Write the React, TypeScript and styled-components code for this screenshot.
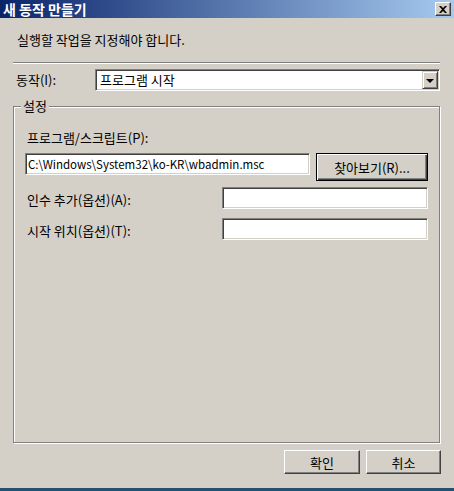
import React from "react";
import styled, { createGlobalStyle } from "styled-components";

const GlobalStyle = createGlobalStyle`
  html, body {
    margin: 0;
    padding: 0;
    background: #d4d0c8;
  }
  body {
    font-family: "Noto Sans CJK KR", "Noto Sans", sans-serif;
    font-size: 13px;
    color: #000;
  }
`;

const Window = styled.div`
  width: 454px;
  height: 491px;
  display: flex;
  flex-direction: column;
  background: #d4d0c8;
  overflow: hidden;
`;

const TitleBar = styled.div`
  height: 18px;
  flex: none;
  display: flex;
  align-items: center;
  justify-content: space-between;
  padding: 0 3px 0 3px;
  background: linear-gradient(to right, #0a246a, #a6caf0);
`;

const TitleText = styled.span`
  color: #fff;
  font-weight: bold;
  font-size: 14px;
  line-height: 18px;
  white-space: nowrap;
`;

const CloseButton = styled.button`
  width: 16px;
  height: 14px;
  padding: 0;
  margin: 0;
  display: flex;
  align-items: center;
  justify-content: center;
  background: #d4d0c8;
  border: 1px solid;
  border-color: #fff #404040 #404040 #fff;
  box-shadow: inset -1px -1px 0 #808080;
`;

const Body = styled.div`
  flex: 1;
  display: flex;
  flex-direction: column;
  padding: 0 13px 14px 13px;
  min-height: 0;
`;

const Instruction = styled.div`
  margin: 14px 0 0 4px;
  line-height: 16px;
  white-space: nowrap;
`;

const Separator = styled.div`
  margin: 14px 1px 0 0;
  height: 0;
  border-top: 1px solid #808080;
  border-bottom: 1px solid #fff;
`;

const ActionRow = styled.div`
  margin-top: 5px;
  display: flex;
  align-items: center;
  margin-right: 1px;
`;

const ActionLabel = styled.label`
  width: 79px;
  padding-left: 3px;
  line-height: 16px;
  white-space: nowrap;
`;

const Combo = styled.div`
  flex: 1;
  height: 22px;
  box-sizing: border-box;
  display: flex;
  align-items: center;
  background: #fff;
  border: 1px solid;
  border-color: #808080 #fff #fff #808080;
  box-shadow: inset 1px 1px 0 #404040, inset -1px -1px 0 #d4d0c8;
  padding: 1px;
`;

const ComboText = styled.span`
  flex: 1;
  padding-left: 3px;
  line-height: 16px;
  white-space: nowrap;
`;

const DropButton = styled.span`
  width: 16px;
  height: 18px;
  box-sizing: border-box;
  display: flex;
  align-items: center;
  justify-content: center;
  background: #d4d0c8;
  border: 1px solid;
  border-color: #d4d0c8 #404040 #404040 #d4d0c8;
  box-shadow: inset 1px 1px 0 #fff, inset -1px -1px 0 #808080;
`;

const Arrow = styled.span`
  width: 0;
  height: 0;
  border-left: 4px solid transparent;
  border-right: 4px solid transparent;
  border-top: 4px solid #000;
  margin-top: 1px;
`;

const GroupBox = styled.fieldset`
  flex: 1;
  margin: 7px 1px 0 0;
  padding: 0;
  min-width: 0;
  border: 1px solid #808080;
  box-shadow: 1px 1px 0 #fff, inset 1px 1px 0 #fff;
  display: flex;
  flex-direction: column;
`;

const Legend = styled.legend`
  margin-left: 7px;
  padding: 0 2px;
  line-height: 16px;
  background: #d4d0c8;
`;

const GroupInner = styled.div`
  display: flex;
  flex-direction: column;
  padding: 16px 11px 0 11px;
`;

const FieldLabel = styled.label`
  padding-left: 2px;
  line-height: 16px;
  white-space: nowrap;
`;

const ProgramRow = styled.div`
  margin-top: 7px;
  display: flex;
  align-items: flex-start;
  gap: 6px;
`;

const TextInput = styled.input`
  flex: 1;
  min-width: 0;
  height: 22px;
  box-sizing: border-box;
  margin: 0;
  padding: 0 2px;
  font-family: inherit;
  font-size: 11.5px;
  color: #000;
  background: #fff;
  border: 1px solid;
  border-color: #808080 #fff #fff #808080;
  box-shadow: inset 1px 1px 0 #404040, inset -1px -1px 0 #d4d0c8;
  outline: none;
`;

const Button = styled.button<{ $default?: boolean; $width: number; $height: number }>`
  width: ${(p) => p.$width}px;
  height: ${(p) => p.$height}px;
  flex: none;
  box-sizing: border-box;
  margin: 0;
  padding: 0;
  font-family: inherit;
  font-size: 13px;
  color: #000;
  background: #d4d0c8;
  border: 1px solid;
  ${(p) =>
    p.$default
      ? `border-color: #000;
         box-shadow: inset 1px 1px 0 #fff, inset -1px -1px 0 #404040, inset -2px -2px 0 #808080;`
      : `border-color: #fff #404040 #404040 #fff;
         box-shadow: inset -1px -1px 0 #808080;`}
`;

const OptionRow = styled.div<{ $gap: number }>`
  margin-top: ${(p) => p.$gap}px;
  display: flex;
  align-items: flex-start;
`;

const OptionLabel = styled.label`
  width: 195px;
  padding: 5px 0 0 2px;
  line-height: 16px;
  white-space: nowrap;
`;

const Footer = styled.div`
  margin-top: 7px;
  display: flex;
  justify-content: flex-end;
  gap: 6px;
`;

const DesktopEdge = styled.div`
  height: 3px;
  flex: none;
  background: #25506e;
`;

export default function App() {
  return (
    <>
      <GlobalStyle />
      <Window>
        <TitleBar>
          <TitleText>새 동작 만들기</TitleText>
          <CloseButton aria-label="닫기">
            <svg width="8" height="7" viewBox="0 0 8 7">
              <path d="M0 0h2l2 2 2-2h2L5 3.5 8 7H6L4 5 2 7H0l3-3.5z" fill="#000" />
            </svg>
          </CloseButton>
        </TitleBar>
        <Body>
          <Instruction>실행할 작업을 지정해야 합니다.</Instruction>
          <Separator />
          <ActionRow>
            <ActionLabel>동작(I):</ActionLabel>
            <Combo>
              <ComboText>프로그램 시작</ComboText>
              <DropButton>
                <Arrow />
              </DropButton>
            </Combo>
          </ActionRow>
          <GroupBox>
            <Legend>설정</Legend>
            <GroupInner>
              <FieldLabel>프로그램/스크립트(P):</FieldLabel>
              <ProgramRow>
                <TextInput defaultValue="C:\Windows\System32\ko-KR\wbadmin.msc" />
                <Button $default $width={112} $height={28}>
                  찾아보기(R)...
                </Button>
              </ProgramRow>
              <OptionRow $gap={6}>
                <OptionLabel>인수 추가(옵션)(A):</OptionLabel>
                <TextInput />
              </OptionRow>
              <OptionRow $gap={9}>
                <OptionLabel>시작 위치(옵션)(T):</OptionLabel>
                <TextInput />
              </OptionRow>
            </GroupInner>
          </GroupBox>
          <Footer>
            <Button $width={76} $height={24}>확인</Button>
            <Button $width={75} $height={24}>취소</Button>
          </Footer>
        </Body>
        <DesktopEdge />
      </Window>
    </>
  );
}
